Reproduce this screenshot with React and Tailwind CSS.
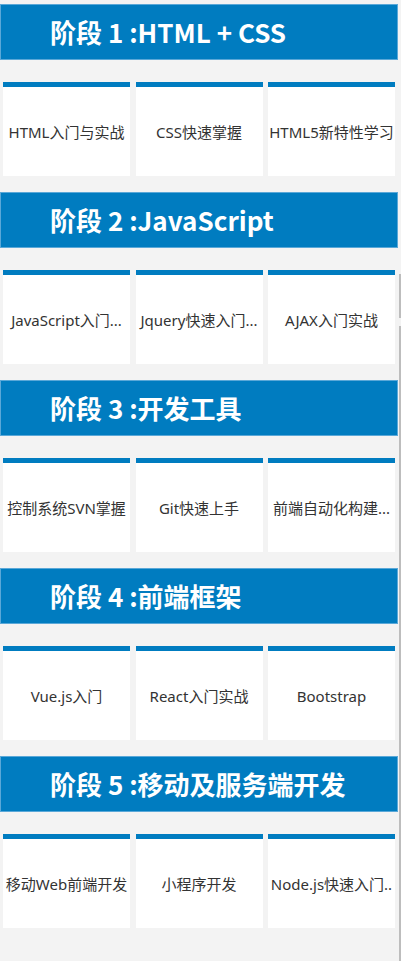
import React from 'react';

const stages = [
  {
    title: '阶段 1 :HTML + CSS',
    courses: ['HTML入门与实战', 'CSS快速掌握', 'HTML5新特性学习'],
  },
  {
    title: '阶段 2 :JavaScript',
    courses: ['JavaScript入门...', 'Jquery快速入门...', 'AJAX入门实战'],
  },
  {
    title: '阶段 3 :开发工具',
    courses: ['控制系统SVN掌握', 'Git快速上手', '前端自动化构建...'],
  },
  {
    title: '阶段 4 :前端框架',
    courses: ['Vue.js入门', 'React入门实战', 'Bootstrap'],
  },
  {
    title: '阶段 5 :移动及服务端开发',
    courses: ['移动Web前端开发', '小程序开发', 'Node.js快速入门..'],
  },
];

export default function App() {
  return (
    <div
      className="relative min-h-[961px] bg-[#f3f3f3] pt-1"
      style={{ fontFamily: '"Noto Sans", "Noto Sans CJK SC", sans-serif' }}
    >
      {stages.map((stage, i) => (
        <section key={i} className="pb-4">
          {/* stage header */}
          <div className="h-[56px] w-[398px] border border-[#5aa8d8] bg-[#007cc0] flex items-center pl-[49px]">
            <h2
              className="text-[26px] font-bold text-white leading-none"
              style={{ fontFamily: '"Noto Sans CJK SC", sans-serif' }}
            >
              {stage.title}
            </h2>
          </div>

          {/* course cards */}
          <div className="mt-[22px] ml-[3px] w-[392px] grid grid-cols-3 gap-x-[5.5px]">
            {stage.courses.map((c, j) => (
              <div
                key={j}
                className="h-[94px] bg-white border-t-[5px] border-[#007cc0] flex items-center justify-center"
              >
                <span className="block w-full overflow-hidden whitespace-nowrap text-center text-[15px] text-[#333] pt-[1px]">
                  {c}
                </span>
              </div>
            ))}
          </div>
        </section>
      ))}

      {/* scrollbar remnant on the right edge */}
      <div className="absolute right-0 top-[274px] w-[2px] h-[44px] bg-[#bdbdbd]" />
      <div className="absolute right-0 top-[326px] bottom-0 w-[2px] bg-[#bdbdbd]" />
    </div>
  );
}
